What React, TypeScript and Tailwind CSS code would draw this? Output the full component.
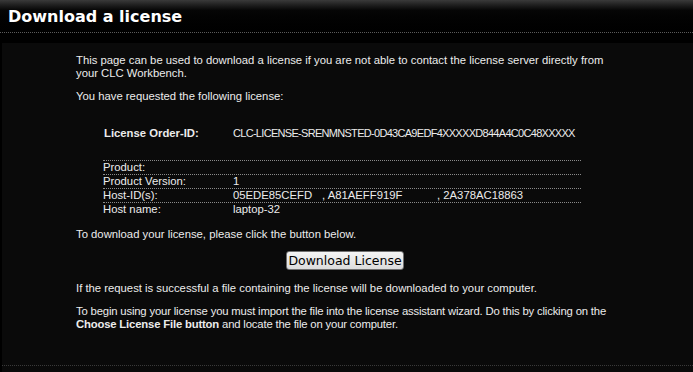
import React from "react";

const rows = [
  { label: "Product:", value: null },
  { label: "Product Version:", value: "1" },
  { label: "Host-ID(s):", value: "hosts" },
  { label: "Host name:", value: "laptop-32" },
];

const App = () => {
  return (
    <div className="w-[693px] h-[372px] bg-black overflow-hidden text-[#ececec] font-['Liberation_Sans',Arial,sans-serif] text-[11.3px] leading-[13px]">
      {/* Header */}
      <div className="h-[43px] bg-gradient-to-b from-[#3a3a3a] via-[#050505] via-[25%] to-black">
        <h1 className="pl-[8px] pt-[7px] font-['DejaVu_Sans',Verdana,sans-serif] text-[16px] leading-[20px] font-bold text-white">
          Download a license
        </h1>
        <div className="mt-[5px] border-t border-dotted border-[#5a5a5a]" />
      </div>

      {/* Panel */}
      <div className="ml-[2px] h-[329px] bg-[#0a0a0a] pt-[11px]">
        <div className="pl-[74px] w-[616px]">
          <p>
            This page can be used to download a license if you are not able to contact the license server directly from your CLC Workbench.
          </p>
          <p className="mt-[10px]">You have requested the following license:</p>

          <div className="mt-[24px] pl-[28px] flex font-bold whitespace-nowrap">
            <span className="w-[129px] shrink-0">License Order-ID:</span>
            <span className="font-normal text-[11px] tracking-[-0.7px]">CLC-LICENSE-SRENMNSTED-0D43CA9EDF4XXXXXD844A4C0C48XXXXX</span>
          </div>

          <div className="mt-[20px] ml-[27px] w-[478px]">
            {rows.map((r) => (
              <div key={r.label} className="flex h-[14px] items-center border-t border-dotted border-[#8a8a8a] whitespace-nowrap">
                <span className="w-[130px] shrink-0">{r.label}</span>
                {r.value === "hosts" ? (
                  <span className="flex">
                    <span className="w-[89px] shrink-0">05EDE85CEFD</span>
                    <span className="w-[115px] shrink-0">, A81AEFF919F</span>
                    <span>, 2A378AC18863</span>
                  </span>
                ) : (
                  <span>{r.value}</span>
                )}
              </div>
            ))}
          </div>

          <p className="mt-[12px]">To download your license, please click the button below.</p>

          <div className="mt-[10px] flex justify-center pr-[4px]">
            <button className="h-[19px] w-[118px] rounded-[3px] border border-[#707070] bg-gradient-to-b from-[#f4f4f4] to-[#dcdcdc] text-black font-['DejaVu_Sans',Tahoma,sans-serif] text-[12.5px] leading-[15px]">
              Download License
            </button>
          </div>

          <p className="mt-[12px]">If the request is successful a file containing the license will be downloaded to your computer.</p>
          <p className="mt-[10px] whitespace-nowrap tracking-[-0.17px]">
            To begin using your license you must import the file into the license assistant wizard. Do this by clicking on the
            <br />
            <strong className="font-bold">Choose License File button</strong> and locate the file on your computer.
          </p>
        </div>
        <div className="mt-[34px] border-t border-dotted border-[#3a3a3a]" />
      </div>
    </div>
  );
};

export default App;
